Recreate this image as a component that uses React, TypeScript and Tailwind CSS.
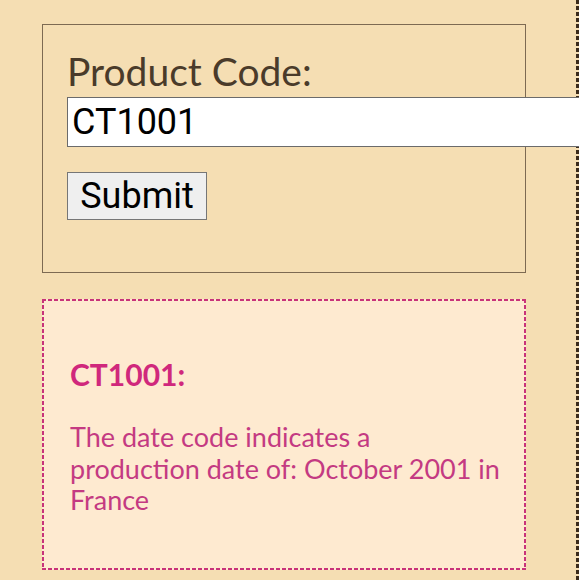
export default function App() {
  return (
    <div className="w-[579px] h-[580px] overflow-hidden [background:repeating-linear-gradient(180deg,#3b2b1b_0_4px,transparent_4px_6px)_right/3px_100%_no-repeat,#f5deb3]">
      <div className="h-full pl-[42px] pt-[24px] font-['Lato',sans-serif]">
        <div className="w-[484px] h-[249px] border border-[#7d6a52] pl-[24px] pt-[24px]">
          <label className="block text-[39px] leading-[45px] text-[#4a3b2a]">Product Code:</label>
          <input
            type="text"
            defaultValue="CT1001"
            className="mt-[3px] block w-[530px] h-[50px] bg-white border border-[#6b6b6b] px-[4px] text-[36px] text-black font-['Roboto',sans-serif] outline-none"
          />
          <button className="mt-[25px] w-[140px] h-[48px] bg-[#efefef] border border-[#767676] text-[36px] leading-none text-black font-['Roboto',sans-serif]">
            Submit
          </button>
        </div>
        <div className="mt-[26px] w-[484px] h-[271px] pl-[28px] pt-[57px] [background:repeating-linear-gradient(90deg,#c8337a_0_4px,transparent_4px_6px)_top/100%_2px_no-repeat,repeating-linear-gradient(90deg,#c8337a_0_4px,transparent_4px_6px)_bottom/100%_2px_no-repeat,repeating-linear-gradient(180deg,#c8337a_0_4px,transparent_4px_6px)_left/2px_100%_no-repeat,repeating-linear-gradient(180deg,#c8337a_0_4px,transparent_4px_6px)_right/2px_100%_no-repeat,#feead0]">
          <h2 className="text-[30px] leading-[36px] font-bold text-[#d0287c]">CT1001:</h2>
          <p className="mt-[29px] w-[433px] text-[27px] leading-[31.5px] text-[#c43a82]">
            The date code indicates a production date of: October 2001 in France
          </p>
        </div>
      </div>
    </div>
  );
}
